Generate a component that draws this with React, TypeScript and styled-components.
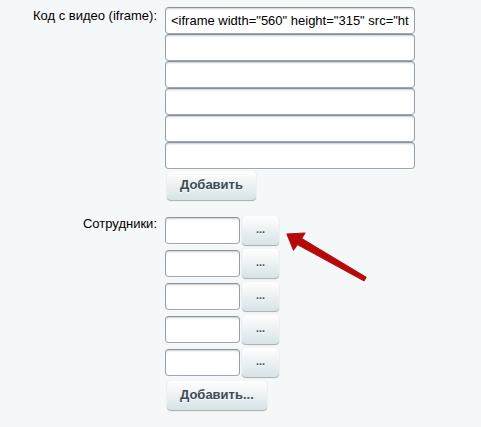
import React from "react";
import styled, { createGlobalStyle } from "styled-components";

const GlobalStyle = createGlobalStyle`
  html, body {
    margin: 0;
    padding: 0;
    background: #f5f8f9;
  }
  body {
    font-family: "Liberation Sans", Arial, sans-serif;
    font-size: 13px;
    color: #000;
  }
`;

const Page = styled.div`
  position: relative;
  width: 481px;
  height: 427px;
  box-sizing: border-box;
  padding-top: 7px;
  background: #f5f8f9;
`;

const Form = styled.div`
  display: grid;
  grid-template-columns: 157px 1fr;
  column-gap: 8px;
  row-gap: 16px;
`;

const Label = styled.div<{ $offset: number }>`
  text-align: right;
  font-size: 13px;
  line-height: 15px;
  color: #000;
  padding-top: ${(p) => p.$offset}px;
`;

const Field = styled.div`
  display: flex;
  flex-direction: column;
  align-items: flex-start;
`;

const TextInput = styled.input<{ $width: number }>`
  box-sizing: border-box;
  width: ${(p) => p.$width}px;
  height: 27px;
  margin: 0;
  padding: 0 5px;
  border: 1px solid;
  border-color: #87919c #959ea9 #9ea7b1 #959ea9;
  border-radius: 4px;
  background: #fff;
  box-shadow: 0 1px 0 0 rgba(255, 255, 255, 0.3),
    inset 0 2px 2px -1px rgba(180, 188, 191, 0.7);
  font-family: "Liberation Sans", Arial, sans-serif;
  font-size: 13px;
  color: #000;
  outline: none;
`;

const Button = styled.button<{ $top?: number }>`
  box-sizing: border-box;
  height: 29px;
  margin: ${(p) => p.$top ?? 0}px 0 0 2px;
  padding: 0 13px 2px;
  border: none;
  border-radius: 4px;
  background-color: #e0e9ec;
  background-image: linear-gradient(to top, #d7e3e7, #ffffff);
  box-shadow: 0 0 1px rgba(0, 0, 0, 0.11), 0 1px 1px rgba(0, 0, 0, 0.3),
    inset 0 1px #fff, inset 0 0 1px rgba(255, 255, 255, 0.5);
  color: #3f4b54;
  font-family: "Liberation Sans", Arial, sans-serif;
  font-weight: bold;
  font-size: 13px;
  text-shadow: 0 1px rgba(255, 255, 255, 0.7);
  cursor: pointer;
`;

const Rows = styled.div`
  display: flex;
  flex-direction: column;
  align-items: flex-start;
  gap: 4px;
`;

const Row = styled.div`
  display: flex;
  align-items: flex-start;
  gap: 2px;
`;

const RowInput = styled(TextInput)`
  margin-top: 1px;
`;

const DotsButton = styled(Button)`
  width: 37px;
  margin: 0;
  padding: 0 0 4px;
  font-size: 11px;
  letter-spacing: 0;
`;

const Arrow = styled.svg`
  position: absolute;
  left: 280px;
  top: 225px;
`;

const videoRows = [
  '<iframe width="560" height="315" src="https://www.youtube.com/embed/" frameborder="0" allowfullscreen></iframe>',
  "",
  "",
  "",
  "",
  "",
];

export default function App() {
  return (
    <>
      <GlobalStyle />
      <Page>
        <Form>
          <Label $offset={1}>Код с видео (iframe):</Label>
          <Field>
            {videoRows.map((v, i) => (
              <TextInput key={i} $width={250} defaultValue={v} />
            ))}
            <Button $top={2}>Добавить</Button>
          </Field>

          <Label $offset={-1}>Сотрудники:</Label>
          <Field>
            <Rows>
              {[0, 1, 2, 3, 4].map((i) => (
                <Row key={i}>
                  <RowInput $width={75} defaultValue="" />
                  <DotsButton>...</DotsButton>
                </Row>
              ))}
              <Button $top={0}>Добавить...</Button>
            </Rows>
          </Field>
        </Form>

        <Arrow width="95" height="60" viewBox="0 0 95 60">
          <polygon
            points="7,9 25,8 21.5,13.5 86,52.2 84,55.8 17.5,19.5 13.5,25"
            fill="#b60a0a"
            stroke="#b60a0a"
            strokeWidth="1.2"
            strokeLinejoin="round"
          />
        </Arrow>
      </Page>
    </>
  );
}
